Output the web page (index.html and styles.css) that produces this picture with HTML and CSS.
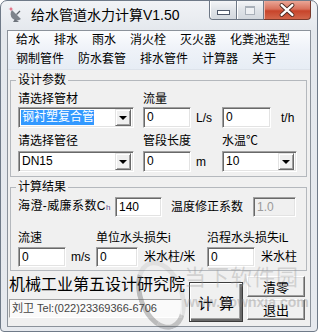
FILE: index.html
```html
<!DOCTYPE html>
<html lang="zh-CN">
<head>
    <meta charset="UTF-8">
    <title>给水管道水力计算V1.50</title>
    <link rel="stylesheet" href="styles.css">
</head>
<body>
<div class="window">
    <div class="title-bar">
        <svg class="app-icon" viewBox="0 0 17 17">
            <path d="M4 4 L13 13 A6.4 6.4 0 0 1 4 4 Z" fill="#7d838b"/>
            <path d="M4 4 L13 13" stroke="#b9bec4" stroke-width="1"/>
            <path d="M8.5 8.5 L12 5" stroke="#5d636b" stroke-width="1.2"/>
            <path d="M7 13 L5 16 L11 16 Z" fill="#6d737b"/>
            <path d="M3 0.5 L3.6 2.4 L5.5 3 L3.6 3.6 L3 5.5 L2.4 3.6 L0.5 3 L2.4 2.4 Z" fill="#e0506a"/>
        </svg>
        <span class="title">给水管道水力计算V1.50</span>
        <div class="caption">
            <div class="cap-btn cap-min"><i></i></div>
            <div class="cap-btn cap-max"><i></i></div>
            <div class="cap-btn cap-close">
                <svg viewBox="0 0 47 19">
                    <path d="M18 4 L29 14 M29 4 L18 14" stroke="#4a2a22" stroke-width="4.2" stroke-linecap="round"/>
                    <path d="M18 4 L29 14 M29 4 L18 14" stroke="#fff" stroke-width="2.4" stroke-linecap="round"/>
                </svg>
            </div>
        </div>
    </div>

    <div class="client">
        <div class="menu-bar">
            <div class="menu-row">
                <span>给水</span><span>排水</span><span>雨水</span><span>消火栓</span><span>灭火器</span><span>化粪池选型</span>
            </div>
            <div class="menu-row">
                <span>钢制管件</span><span>防水套管</span><span>排水管件</span><span>计算器</span><span>关于</span>
            </div>
        </div>

        <fieldset class="group group-params">
            <legend>设计参数</legend>
            <div class="param-grid">
                <span class="lbl">请选择管材</span>
                <span class="lbl">流量</span>
                <span class="lbl"></span>

                <div class="combo w116"><span class="val selected">钢衬塑复合管</span><b class="drop"></b></div>
                <div class="field"><div class="edit w48">0</div><span class="unit">L/s</span></div>
                <div class="field"><div class="edit w49">0</div><span class="unit unit-th">t/h</span></div>

                <span class="lbl lbl-low">请选择管径</span>
                <span class="lbl lbl-low">管段长度</span>
                <span class="lbl lbl-low">水温℃</span>

                <div class="combo w116"><span class="val">DN15</span><b class="drop"></b></div>
                <div class="field"><div class="edit w48">0</div><span class="unit">m</span></div>
                <div class="combo w75"><span class="val">10</span><b class="drop"></b></div>
            </div>
        </fieldset>

        <fieldset class="group group-result">
            <legend>计算结果</legend>
            <div class="coef-row">
                <span class="lbl lbl-ch">海澄-威廉系数C<small>h</small></span>
                <div class="edit e-ch">140</div>
                <span class="lbl lbl-temp">温度修正系数</span>
                <div class="edit e-temp disabled">1.0</div>
            </div>
            <div class="result-grid">
                <span class="lbl">流速</span>
                <span class="lbl">单位水头损失i</span>
                <span class="lbl">沿程水头损失iL</span>

                <div class="field"><div class="edit w48">0</div><span class="unit">m/s</span></div>
                <div class="field"><div class="edit w42">0</div><span class="unit unit-cn">米水柱/米</span></div>
                <div class="field"><div class="edit w48">0</div><span class="unit unit-cn">米水柱</span></div>
            </div>
        </fieldset>

        <div class="footer">
            <div class="credits">
                <div class="org">机械工业第五设计研究院</div>
                <div class="status">刘卫 Tel:(022)23369366-6706</div>
            </div>
            <div class="btn btn-calc">计 算</div>
            <div class="side-btns">
                <div class="btn">清零</div>
                <div class="btn">退出</div>
            </div>
        </div>
    </div>

    <div class="watermark">
        <div class="wm-ring"></div>
        <div class="wm-name">当下软件园</div>
        <div class="wm-url">www.downxia.com</div>
    </div>
</div>
</body>
</html>
```

FILE: styles.css
```css
body {
    margin: 0;
    background: #fff;
    font-family: "Liberation Sans", "Noto Sans CJK SC", sans-serif;
    color: #000;
}

.window {
    position: relative;
    width: 318px;
    height: 332px;
    box-sizing: border-box;
    border: 1px solid #6f7a88;
    border-radius: 7px 7px 4px 4px;
    background: linear-gradient(#f1f3f6, #e4e8ed 30px, #e6e9ee);
    display: flex;
    flex-direction: column;
    overflow: hidden;
}

/* title bar */

.title-bar {
    height: 29px;
    display: flex;
    align-items: flex-start;
}

.app-icon {
    width: 17px;
    height: 17px;
    margin: 5px 0 0 7px;
}

.title {
    margin: 5px 0 0 6px;
    font-size: 14px;
    line-height: 18px;
}

.caption {
    margin-left: auto;
    margin-right: 6px;
    display: flex;
}

.cap-btn {
    height: 19px;
    box-sizing: border-box;
    border: 1px solid #6d7785;
    border-top: none;
    display: flex;
    align-items: center;
    justify-content: center;
}

.cap-min {
    width: 28px;
    border-radius: 0 0 0 4px;
    background: linear-gradient(#f4f5f7, #dfe3e8 50%, #d3d8de);
    box-shadow: inset 1px 0 #fff;
}

.cap-max {
    width: 27px;
    border-left: none;
    background: linear-gradient(#f4f5f7, #dfe3e8 50%, #d3d8de);
    box-shadow: inset 1px 0 #fff;
}

.cap-min i {
    width: 11px;
    height: 3px;
    margin-top: 5px;
    border: 1px solid #50596a;
    background: #fff;
}

.cap-max i {
    width: 8px;
    height: 6px;
    border: 1px solid #a9b0b9;
    border-top-width: 2px;
    background: #eef0f3;
}

.cap-close {
    width: 47px;
    border-left: none;
    border-color: #7a3a2c;
    border-radius: 0 0 4px 0;
    background: linear-gradient(#eaa696, #d8705b 45%, #c7442a 55%, #d2664b);
    box-shadow: inset 1px 0 #f0b3a5;
}

.cap-close svg {
    width: 47px;
    height: 19px;
}

/* client area */

.client {
    flex: 1;
    margin: 0 6px 4px;
    border: 1px solid #8b929b;
    background: #f0f0f0;
    display: flex;
    flex-direction: column;
    font-size: 12px;
}

.menu-bar {
    height: 38px;
    padding-left: 1px;
    background: linear-gradient(#fbfcfe, #eef2f8 50%, #e7edf5);
    border-bottom: 1px solid #dde3eb;
}

.menu-row {
    display: flex;
    height: 19px;
    line-height: 19px;
}

.menu-row span {
    padding: 0 7px;
}

/* group boxes */

.group {
    margin: 3px 3px 0 2px;
    padding: 5px 0 4px 7px;
    border: 1px solid #b4b8bd;
    min-width: 0;
}

.group legend {
    margin-left: -2px;
    padding: 0 2px;
    font-size: 12px;
    line-height: 14px;
}

.lbl {
    font-size: 12px;
    line-height: 14px;
    white-space: nowrap;
}

.lbl small {
    font-size: 8px;
    color: #5a4a8a;
}

.param-grid {
    display: grid;
    grid-template-columns: 125px 79px 1fr;
    grid-template-rows: 15px 21px 23px 21px;
}

.lbl-low {
    margin-top: 6px;
}

.field {
    display: flex;
    align-items: center;
}

.unit {
    margin-left: 5px;
    font-size: 12px;
    line-height: 14px;
}

.unit-th {
    margin-left: 10px;
}

.unit-cn {
    margin-left: 6px;
}

/* controls */

.edit,
.combo {
    box-sizing: border-box;
    height: 21px;
    background: #fff;
    border: 1px solid;
    border-color: #a0a0a0 #fff #fff #a0a0a0;
    box-shadow: inset 1px 1px #696969, inset -1px -1px #e3e3e3;
    font-size: 12px;
    line-height: 19px;
    padding-left: 3px;
}

.edit.disabled {
    background: #f0f0f0;
    color: #9a9a9a;
}

.combo {
    display: flex;
    align-items: center;
    padding: 2px;
}

.combo .val {
    flex: 1;
    line-height: 15px;
    padding-left: 1px;
}

.combo .selected {
    flex: none;
    background: #3399ff;
    color: #fff;
}

.drop {
    width: 16px;
    height: 17px;
    margin-left: auto;
    box-sizing: border-box;
    background: #f0f0f0;
    border: 1px solid;
    border-color: #e3e3e3 #696969 #696969 #e3e3e3;
    box-shadow: inset 1px 1px #fff, inset -1px -1px #a0a0a0;
    display: flex;
    align-items: center;
    justify-content: center;
}

.drop::after {
    content: "";
    border-left: 4px solid transparent;
    border-right: 4px solid transparent;
    border-top: 4px solid #000;
    margin-top: 1px;
}

.w116 { width: 116px; }
.w75 { width: 75px; }
.w48 { width: 48px; }
.w49 { width: 49px; }
.w42 { width: 42px; }

.group-result {
    padding-top: 3px;
    padding-bottom: 3px;
}

.coef-row {
    display: flex;
    align-items: center;
}

.lbl-ch {
    width: 97px;
    letter-spacing: 0.4px;
}

.edit.e-ch {
    width: 47px;
    height: 20px;
}

.lbl-temp {
    width: 82px;
    margin-left: 9px;
}

.edit.e-temp {
    width: 43px;
    height: 20px;
}

.result-grid {
    display: grid;
    grid-template-columns: 78px 111px 1fr;
    grid-template-rows: 30px 20px;
}

.result-grid .lbl {
    align-self: end;
    margin-bottom: 2px;
}

.result-grid .edit {
    height: 20px;
}

/* footer */

.footer {
    display: flex;
    padding-left: 1px;
}

.credits {
    width: 173px;
}

.org {
    margin-top: 4px;
    font-size: 16px;
    line-height: 20px;
    white-space: nowrap;
}

.status {
    box-sizing: border-box;
    margin-top: 4px;
    height: 19px;
    padding-left: 2px;
    background: #fafafa;
    border: 1px solid;
    border-color: #a0a0a0 #fff #fff #a0a0a0;
    font-size: 11px;
    line-height: 17px;
    color: #444;
    white-space: nowrap;
}

.btn {
    box-sizing: border-box;
    background: #f0f0f0;
    border: 1px solid;
    border-color: #fff #696969 #696969 #fff;
    box-shadow: inset -1px -1px #a0a0a0, inset 1px 1px #e3e3e3;
    display: flex;
    align-items: center;
    justify-content: center;
    font-size: 13px;
}

.btn-calc {
    width: 54px;
    height: 40px;
    margin: 11px 0 0 7px;
    border: 1px solid #3c3c3c;
    box-shadow: inset 1px 1px #fff, inset -2px -2px #696969, inset -3px -3px #a0a0a0;
    font-size: 15px;
    word-spacing: 2px;
}

.side-btns {
    margin: 5px 0 0 4px;
    display: flex;
    flex-direction: column;
    gap: 2px;
}

.side-btns .btn {
    width: 58px;
    height: 21px;
}

/* watermark over the lower right corner */

.watermark {
    position: absolute;
    left: 0;
    top: 0;
    pointer-events: none;
}

.wm-ring {
    position: absolute;
    left: 137px;
    top: 258px;
    width: 36px;
    height: 62px;
    border-radius: 50%;
    border: 5px solid rgba(120, 120, 120, 0.12);
    border-left-color: rgba(90, 90, 90, 0.35);
    border-bottom-color: rgba(90, 90, 90, 0.3);
    transform: rotate(-20deg);
}

.wm-name {
    position: absolute;
    left: 183px;
    top: 259px;
    font-family: "Noto Sans CJK SC", sans-serif;
    font-size: 22px;
    line-height: 30px;
    letter-spacing: 1px;
    color: rgba(150, 150, 150, 0.35);
    white-space: nowrap;
}

.wm-url {
    position: absolute;
    left: 183px;
    top: 293px;
    font-size: 14px;
    line-height: 16px;
    font-weight: bold;
    color: rgba(130, 130, 130, 0.35);
    white-space: nowrap;
}
```
